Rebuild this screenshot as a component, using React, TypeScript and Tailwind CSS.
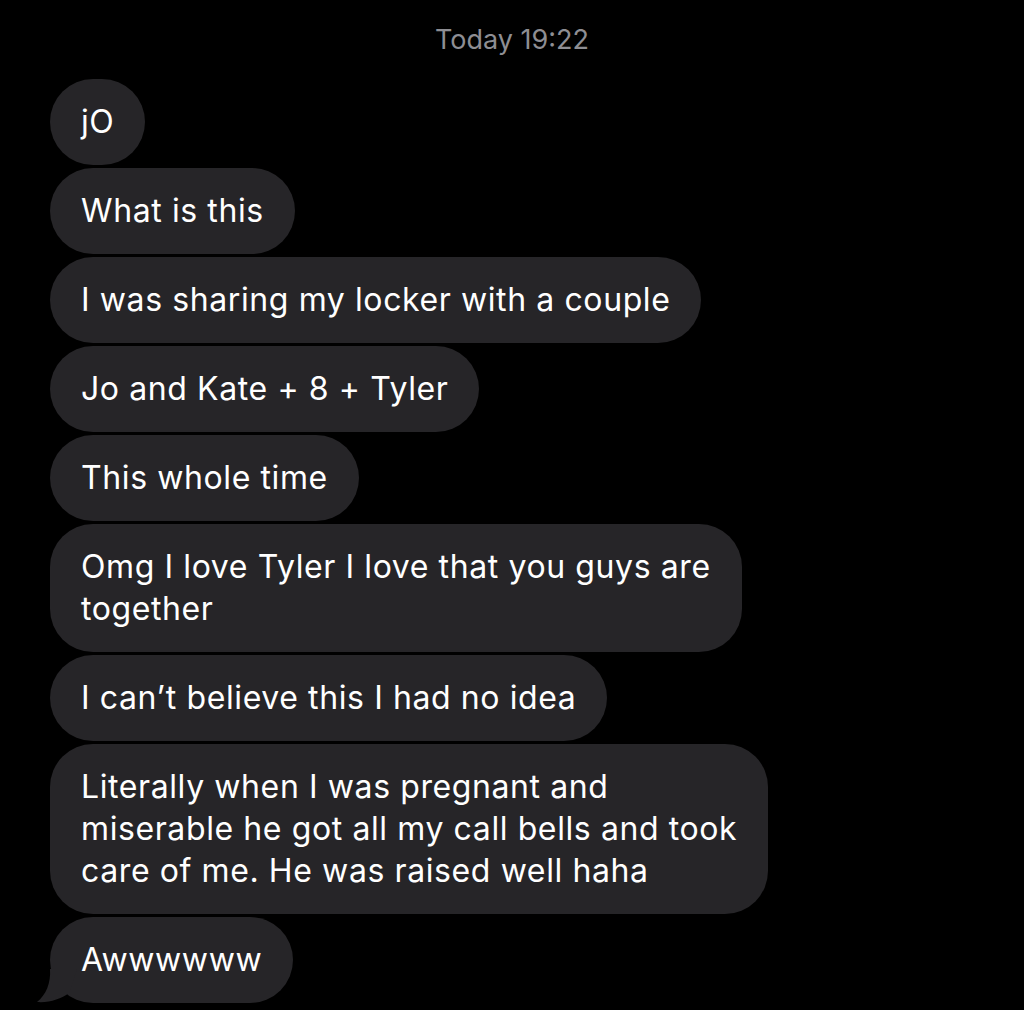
import React from 'react';

const messages: string[][] = [
  ['jO'],
  ['What is this'],
  ['I was sharing my locker with a couple'],
  ['Jo and Kate + 8 + Tyler'],
  ['This whole time'],
  ['Omg I love Tyler I love that you guys are', 'together'],
  ['I can’t believe this I had no idea'],
  ['Literally when I was pregnant and', 'miserable he got all my call bells and took', 'care of me. He was raised well haha'],
  ['Awwwwww'],
];

const Bubble: React.FC<{ lines: string[]; tail?: boolean }> = ({ lines, tail }) => (
  <div className="relative self-start">
    <div className="rounded-[43px] bg-[#262528] px-[31px] py-[22px] text-[32px] leading-[42px] tracking-[0.6px] text-white">
      {lines.map((l, i) => (
        <div key={i} className="whitespace-nowrap">
          {l}
        </div>
      ))}
    </div>
    {tail && (
      <svg className="absolute -left-[13px] bottom-0" width="40" height="34" viewBox="0 0 40 34">
        <path d="M13 0 C14 14 9 26 0 33 C12 34 24 30 32 24 L40 0 Z" fill="#262528" />
      </svg>
    )}
  </div>
);

const App: React.FC = () => {
  return (
    <div
      className="h-[1010px] w-[1024px] overflow-hidden bg-black"
      style={{ fontFamily: 'Inter, "Noto Sans", sans-serif' }}
    >
      <div className="pt-[24px] text-center text-[27px] leading-[32px] text-[#8e8e93]">Today 19:22</div>
      <div className="mt-[23px] flex flex-col gap-[3px] pl-[50px]">
        {messages.map((m, i) => (
          <Bubble key={i} lines={m} tail={i === messages.length - 1} />
        ))}
      </div>
    </div>
  );
};

export default App;
